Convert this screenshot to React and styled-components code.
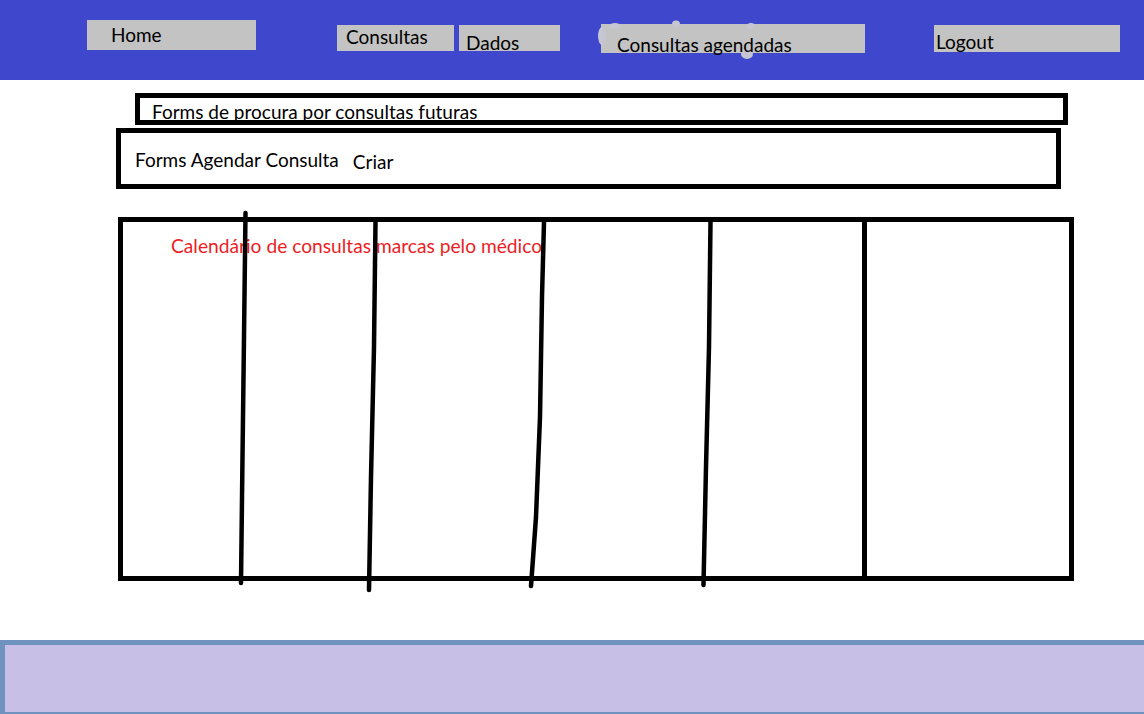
import React from "react";
import styled, { createGlobalStyle } from "styled-components";

const Global = createGlobalStyle`
  html, body { margin: 0; padding: 0; background: #ffffff; }
  body { font-family: Lato, "Liberation Sans", sans-serif; overflow: hidden; }
  * { box-sizing: border-box; }
`;

const Page = styled.div`
  width: 1144px;
  height: 714px;
  display: flex;
  flex-direction: column;
  background: #ffffff;
`;

const Header = styled.header`
  height: 80px;
  flex: none;
  background: #3f48cc;
  display: flex;
  align-items: flex-start;
  padding-left: 87px;
`;

const NavItem = styled.div`
  position: relative;
  flex: none;
  width: ${(p) => p.$w}px;
  height: ${(p) => p.$h}px;
  margin-top: ${(p) => p.$top}px;
  margin-left: ${(p) => p.$gap}px;
  padding-left: ${(p) => p.$px}px;
  padding-top: ${(p) => p.$pt}px;
  background: #c3c3c3;
  color: #000;
  font-size: 19px;
  line-height: 1;
  white-space: nowrap;
`;

const Smudge = styled.svg`
  position: absolute;
  left: -6px;
  top: -6px;
  overflow: visible;
  pointer-events: none;
`;

const NavLabel = styled.span`
  position: relative;
`;

const Main = styled.main`
  display: flex;
  flex-direction: column;
  align-items: flex-start;
`;

const FormBox = styled.section`
  width: ${(p) => p.$w}px;
  height: ${(p) => p.$h}px;
  margin-left: ${(p) => p.$x}px;
  margin-top: ${(p) => p.$mt}px;
  border: 5px solid #000;
  padding-left: ${(p) => p.$px}px;
  padding-top: ${(p) => p.$pt}px;
  overflow: hidden;
  display: flex;
  align-items: flex-start;
  font-size: 19px;
  line-height: 1;
  color: #000;
  white-space: nowrap;
`;

const FormText = styled.span`
  margin-left: ${(p) => p.$ml || 0}px;
  margin-top: ${(p) => p.$mt || 0}px;
`;

const Calendar = styled.section`
  position: relative;
  width: 956px;
  height: 364px;
  margin-left: 118px;
  margin-top: 28px;
  border: 5px solid #000;
  padding-left: 48px;
  padding-top: 14.4px;
  font-size: 19.2px;
  line-height: 1;
`;

const CalendarTitle = styled.div`
  color: #ed1c24;
  white-space: nowrap;
`;

const Strokes = styled.svg`
  position: absolute;
  left: -5px;
  top: -5px;
  overflow: visible;
  pointer-events: none;
`;

const Footer = styled.footer`
  margin-top: 59px;
  width: 100%;
  height: 74px;
  flex: none;
  background: #c8bfe7;
  border-top: 5px solid #7092be;
  border-left: 5px solid #7092be;
  border-bottom: 2px solid #7092be;
`;

const navItems = [
  { label: "Home", w: 169, h: 30, top: 20, gap: 0, px: 24, pt: 5 },
  { label: "Consultas", w: 117, h: 26, top: 25, gap: 81, px: 9, pt: 1.8 },
  { label: "Dados", w: 101, h: 26, top: 25, gap: 5, px: 7, pt: 8.3 },
  { label: "Consultas agendadas", w: 264, h: 29, top: 24, gap: 41, px: 16, pt: 10.7, smudge: true },
  { label: "Logout", w: 186, h: 27, top: 25, gap: 69, px: 2, pt: 6.8 },
];

const lines = [
  "127.5,-4 126,120 124.5,240 123,366",
  "257.5,5 256,130 253,260 251,373",
  "426,5 424,80 422,200 418,300 413,369",
  "592.5,5 591,130 588,250 585.5,368",
  "746.5,2 746.5,361",
];

export default function App() {
  return (
    <Page>
      <Global />
      <Header>
        {navItems.map((n) => (
          <NavItem key={n.label} $w={n.w} $h={n.h} $top={n.top} $gap={n.gap} $px={n.px} $pt={n.pt}>
            {n.smudge && (
              <Smudge width="280" height="45" viewBox="0 0 280 45">
                <g fill="#c6c6d2">
                  <ellipse cx="7" cy="18" rx="4" ry="9" />
                  <ellipse cx="20" cy="8" rx="6" ry="3" />
                  <ellipse cx="81" cy="6" rx="4" ry="3.5" />
                  <ellipse cx="156" cy="8" rx="4" ry="3" />
                  <ellipse cx="152" cy="36" rx="6" ry="5" />
                </g>
              </Smudge>
            )}
            <NavLabel>{n.label}</NavLabel>
          </NavItem>
        ))}
      </Header>
      <Main>
        <FormBox $w={933} $h={32} $x={135} $mt={13} $px={12} $pt={4.4}>
          <FormText>Forms de procura por consultas futuras</FormText>
        </FormBox>
        <FormBox $w={945} $h={61} $x={116} $mt={3} $px={14} $pt={17}>
          <FormText>Forms Agendar Consulta</FormText>
          <FormText $ml={14} $mt={2.3}>Criar</FormText>
        </FormBox>
        <Calendar>
          <CalendarTitle>Calendário de consultas marcas pelo médico</CalendarTitle>
          <Strokes width="956" height="364" viewBox="0 0 956 364">
            {lines.map((pts, i) => (
              <polyline
                key={i}
                points={pts}
                fill="none"
                stroke="#000"
                strokeWidth={i === 4 ? 5 : 4.5}
                strokeLinecap={i === 4 ? "butt" : "round"}
                strokeLinejoin="round"
              />
            ))}
          </Strokes>
        </Calendar>
      </Main>
      <Footer />
    </Page>
  );
}
